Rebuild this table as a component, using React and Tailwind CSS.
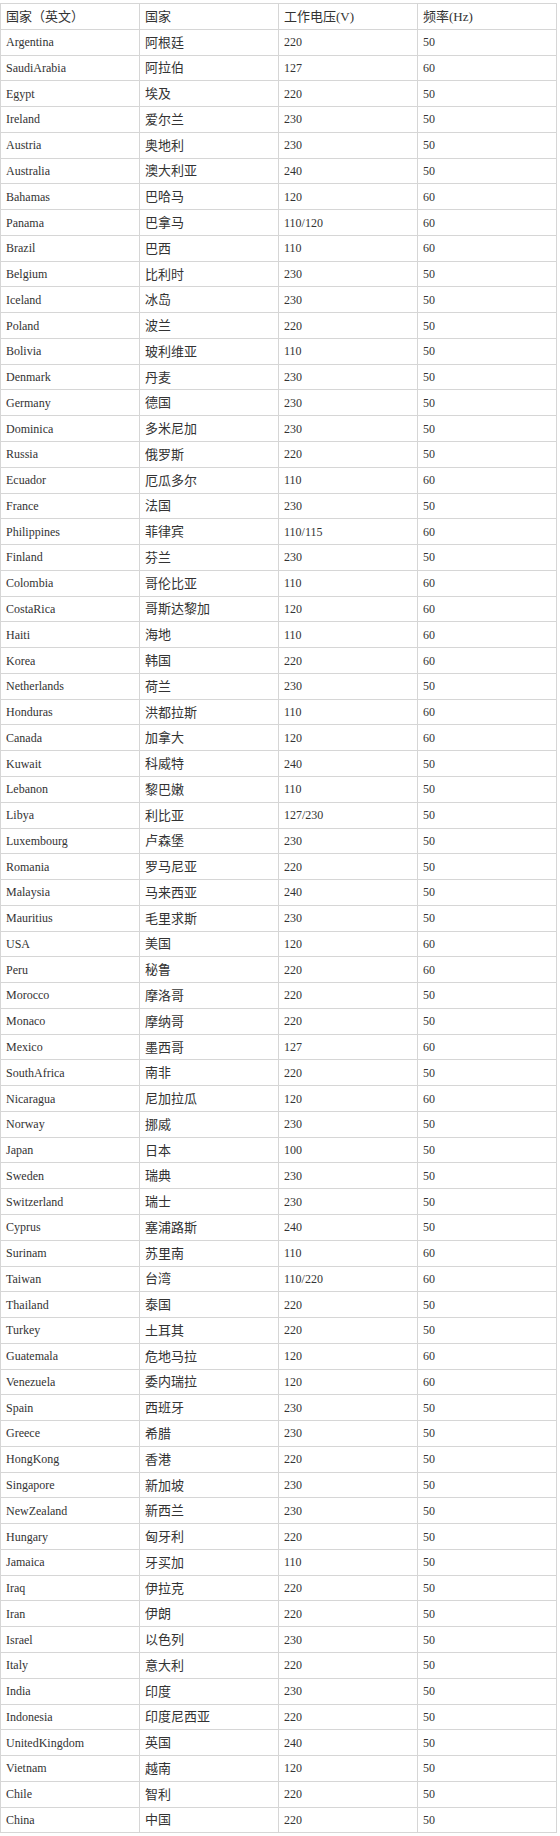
import React from "react";

// 各国电压与频率
const rows = [
	["Argentina", "阿根廷", "220", "50"],
	["SaudiArabia", "阿拉伯", "127", "60"],
	["Egypt", "埃及", "220", "50"],
	["Ireland", "爱尔兰", "230", "50"],
	["Austria", "奥地利", "230", "50"],
	["Australia", "澳大利亚", "240", "50"],
	["Bahamas", "巴哈马", "120", "60"],
	["Panama", "巴拿马", "110/120", "60"],
	["Brazil", "巴西", "110", "60"],
	["Belgium", "比利时", "230", "50"],
	["Iceland", "冰岛", "230", "50"],
	["Poland", "波兰", "220", "50"],
	["Bolivia", "玻利维亚", "110", "50"],
	["Denmark", "丹麦", "230", "50"],
	["Germany", "德国", "230", "50"],
	["Dominica", "多米尼加", "230", "50"],
	["Russia", "俄罗斯", "220", "50"],
	["Ecuador", "厄瓜多尔", "110", "60"],
	["France", "法国", "230", "50"],
	["Philippines", "菲律宾", "110/115", "60"],
	["Finland", "芬兰", "230", "50"],
	["Colombia", "哥伦比亚", "110", "60"],
	["CostaRica", "哥斯达黎加", "120", "60"],
	["Haiti", "海地", "110", "60"],
	["Korea", "韩国", "220", "60"],
	["Netherlands", "荷兰", "230", "50"],
	["Honduras", "洪都拉斯", "110", "60"],
	["Canada", "加拿大", "120", "60"],
	["Kuwait", "科威特", "240", "50"],
	["Lebanon", "黎巴嫩", "110", "50"],
	["Libya", "利比亚", "127/230", "50"],
	["Luxembourg", "卢森堡", "230", "50"],
	["Romania", "罗马尼亚", "220", "50"],
	["Malaysia", "马来西亚", "240", "50"],
	["Mauritius", "毛里求斯", "230", "50"],
	["USA", "美国", "120", "60"],
	["Peru", "秘鲁", "220", "60"],
	["Morocco", "摩洛哥", "220", "50"],
	["Monaco", "摩纳哥", "220", "50"],
	["Mexico", "墨西哥", "127", "60"],
	["SouthAfrica", "南非", "220", "50"],
	["Nicaragua", "尼加拉瓜", "120", "60"],
	["Norway", "挪威", "230", "50"],
	["Japan", "日本", "100", "50"],
	["Sweden", "瑞典", "230", "50"],
	["Switzerland", "瑞士", "230", "50"],
	["Cyprus", "塞浦路斯", "240", "50"],
	["Surinam", "苏里南", "110", "60"],
	["Taiwan", "台湾", "110/220", "60"],
	["Thailand", "泰国", "220", "50"],
	["Turkey", "土耳其", "220", "50"],
	["Guatemala", "危地马拉", "120", "60"],
	["Venezuela", "委内瑞拉", "120", "60"],
	["Spain", "西班牙", "230", "50"],
	["Greece", "希腊", "230", "50"],
	["HongKong", "香港", "220", "50"],
	["Singapore", "新加坡", "230", "50"],
	["NewZealand", "新西兰", "230", "50"],
	["Hungary", "匈牙利", "220", "50"],
	["Jamaica", "牙买加", "110", "50"],
	["Iraq", "伊拉克", "220", "50"],
	["Iran", "伊朗", "220", "50"],
	["Israel", "以色列", "230", "50"],
	["Italy", "意大利", "220", "50"],
	["India", "印度", "230", "50"],
	["Indonesia", "印度尼西亚", "220", "50"],
	["UnitedKingdom", "英国", "240", "50"],
	["Vietnam", "越南", "120", "50"],
	["Chile", "智利", "220", "50"],
	["China", "中国", "220", "50"],
];

const headers = ["国家（英文）", "国家", "工作电压(V)", "频率(Hz)"];

const cell =
	"border border-[#d6d6d6] h-[25.77px] px-[5px] py-0 text-left align-middle font-normal";

export default function App() {
	return (
		<div className="bg-white w-[560px] h-[1836px] pt-[3px] text-[#333] text-[12px] leading-none [font-family:'Liberation_Serif','Noto_Sans_CJK_SC',serif]">
			<table className="w-[557px] border-collapse table-fixed">
				<thead>
					<tr>
						{headers.map((h) => (
							<th key={h} className={`${cell} text-[13px]`}>
								{h}
							</th>
						))}
					</tr>
				</thead>
				<tbody>
					{rows.map((r) => (
						<tr key={r[0]}>
							<td className={cell}>{r[0]}</td>
							<td className={`${cell} text-[13px]`}>{r[1]}</td>
							<td className={cell}>{r[2]}</td>
							<td className={cell}>{r[3]}</td>
						</tr>
					))}
				</tbody>
			</table>
		</div>
	);
}
